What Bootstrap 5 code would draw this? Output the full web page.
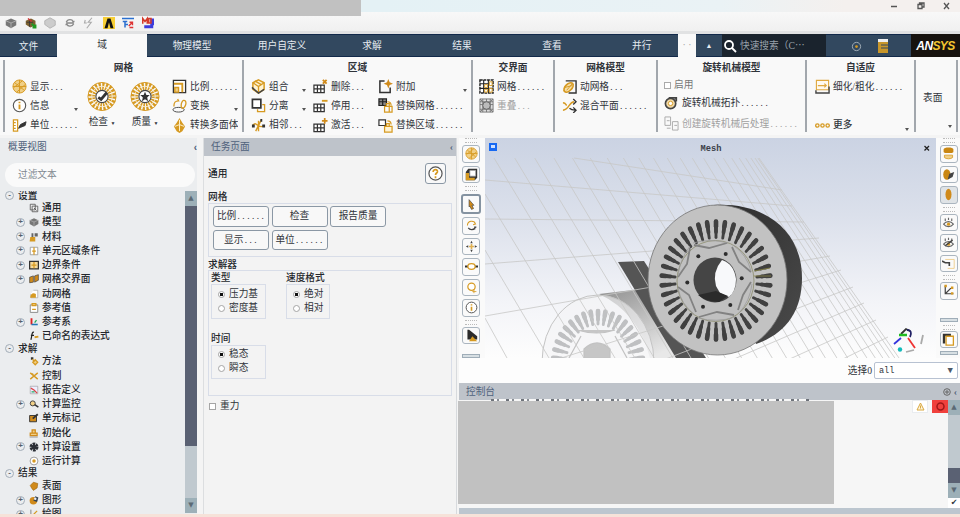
<!DOCTYPE html>
<html lang="zh-CN">
<head>
<meta charset="utf-8">
<title>Mesh</title>
<link href="https://cdn.jsdelivr.net/npm/bootstrap@5.3.0/dist/css/bootstrap.min.css" rel="stylesheet">
<style>
:root{--gold:#d69a22;--ink:#33373c;--navy:#32485f}
body{width:960px;height:517px;overflow:hidden;font:9.7px/12px "Liberation Serif","Noto Sans CJK SC",sans-serif;color:#30343a;background:#f4f4f4;white-space:nowrap}
svg{display:block;flex:none;overflow:hidden}
svg.ic{width:15px;height:15px}
.dt{font:8px/10px "Liberation Mono",monospace}
.titlebar{height:12px;background:linear-gradient(90deg,#e4f1f5 40%,#eaf2f5 75%,#f4f0ee 88%);padding-right:6px}
.redact-top{left:0;top:0;width:361px;height:16px;background:#c1c1c1;z-index:2}
.quick{height:22px;background:linear-gradient(#f8f8f8,#f0f0f0);border-bottom:3px solid #e1e2e3;padding:4px 0 0 5px;gap:7.5px}
.quick svg{width:12px;height:14px}
.tabs{height:23px;background:var(--navy);border-top:1.5px solid #12294a;border-bottom:1.5px solid #12294a;color:#e6ebf0}
.tabs>div{width:90px;display:flex;align-items:center;justify-content:center;flex:none;height:23px;margin-top:-1.5px;padding-top:2px}
.tabs .lit{background:#f9f9f9;color:#30343a;padding:0}
.tabs .find{width:104px;background:#1a232d;color:#98a1aa;justify-content:flex-start;padding-left:1px;gap:3px}
.tabs .brand{width:49px;background:#17130f;font:italic bold 12px "Liberation Sans",sans-serif;color:#fff;letter-spacing:-.6px}
.ribbon{height:78px;background:#f9f9f9;padding-left:3px}
.grp{border-left:2px solid #a2a7ad;height:72px;margin-top:3px;flex:none;padding-top:2px}
.grp h6{font-size:9.7px;line-height:12px;margin:0 0 3px;text-align:center;font-weight:700}
.it{height:19.3px;display:flex;align-items:center;gap:3px}
.it i{margin-left:auto;border:2px solid transparent;border-top:3px solid #555;margin-top:10px;flex:none;height:0}
.dim{color:#a0a0a0}
.big{text-align:center}
.big svg{width:30px;height:31px;margin:0 auto}
.work{height:379px}
.outline{width:197px;background:#ebedef;overflow:hidden;margin-top:3px}
.outline .hd{height:18px;padding:0 0 0 8px;color:#4c5e79}
.filter{height:24px;width:190px;margin:7px 0 3.5px 5px;border-radius:12px;background:#fafafa;padding-left:13px;color:#808890}
.tree{height:323px;overflow:hidden;color:#23262b;font-weight:500}
.sec{height:10.6px;display:flex;align-items:center;padding-left:5px;gap:4px}
.kid{height:14.25px;display:flex;align-items:center;padding-left:16px;gap:3.5px}
.ex{width:9px;height:9px;border:1px solid #a3adb8;border-radius:50%;font:bold 8px/6.5px "Liberation Sans",sans-serif;text-align:center;flex:none;color:#555f6b}
.no{width:9px;flex:none}
.kid svg{width:10px;height:10px}
.sb{width:12px;background:#c0c9cf;display:flex;flex-direction:column}
.sb b{height:15px;background:#9db0b8;color:#5b6a75;font:7px/15px "DejaVu Sans",sans-serif;text-align:center}
.sb u{background:#5a6173}
.phd{height:18px;background:#bec3ca;color:#50627c;padding:0 3px 0 7px}
.task{width:254px;margin:3px 0 0 6px;background:#f3f3f3;border-right:1px solid #d7dadd;border-left:1px solid #dcdee0}
.box{border:1px solid #d8dde8}
.pb{height:20.5px;width:56px;border:1.5px solid #8b98a5;border-radius:3px;background:#f8f8f8;display:flex;align-items:center;justify-content:center;flex:none}
.lb{font-weight:500;color:#24272c}
.rd{width:7px;height:7px;border:1px solid #a5a5a5;border-radius:50%;background:#fff;flex:none}
.rd.on{background:radial-gradient(#111 42%,#fff 55%)}
.opt{height:14px;display:flex;align-items:center;gap:4px}
.tb{width:24px;background:#fafafa;padding-left:1px}
.tbn{width:18px;height:17.5px;margin:0 auto 3px;border:1.5px solid #aab5bf;border-radius:3px;background:#fafafa;display:flex;align-items:center;justify-content:center;flex:none}
.tbn svg{width:13px;height:13px}
.tbn.sel{width:20px;height:20px;border-color:#8593a1;border-width:2px}
.tbn.gr{background:#dfe3e6}
.grip{height:5px;width:12px;margin:0 auto;border-top:1px dotted #bbb;border-bottom:1px dotted #bbb;flex:none}
.mini{width:18px;height:4px;background:#d7dfe3;border:1px solid #9fadb8;margin:0 auto;flex:none}
.view{width:451px;height:220px}
.redact-log{left:-1px;top:1px;width:376px;height:103px;background:#c1c1c1}
.log{height:108px;background:#f6f6f6}
.log-edge{left:32px;top:-1px;width:318px;height:2px;background:repeating-linear-gradient(90deg,#6d727a 0 3px,#f6f6f6 3px 6px,#8a8f96 6px 8px,#f6f6f6 8px 15px)}
.pale{background:#fcfcfc}
.selrow{height:25px;background:#fdfdfd;padding-right:2px}
.dd{width:84px;height:17px;border:1px solid #b8c2d2;border-radius:2px;padding:0 4px;background:#fff;font-family:"Liberation Mono",monospace;font-size:8.500px}
.foot{height:3px;background:#f6e2d9}
</style>
<script src="https://cdn.jsdelivr.net/npm/bootstrap@5.3.0/dist/js/bootstrap.bundle.min.js"></script>
</head>
<body>
<svg width="0" height="0" class="position-absolute"><defs>
<g id="mesh"><circle cx="8" cy="8" r="7" fill="#f0cf86" stroke="#d69a22"/><path d="M3 4l10 8M2 9l9-7M5 14l9-8M8 1v14M1 8h14" stroke="#d69a22" fill="none"/></g>
<g id="info"><circle cx="8" cy="8" r="6.600" fill="#fff" stroke="#555" stroke-width="1.200"/><path d="M8 7v5M8 4v1.600" stroke="#d69a22" stroke-width="2"/></g>
<g id="unit"><path d="M1.500 2h4.500v12h-4.500zM2 5h2M2 8h2M2 11h2" fill="#fff" stroke="#d69a22" stroke-width="1.300"/><path d="M7 11l2-4 6-3-1 4-5 2z" fill="#333" stroke="#333"/></g>
<g id="wheel"><circle cx="16" cy="16" r="11" fill="none" stroke="#d69a22" stroke-width="8" stroke-dasharray="2.100 1.350"/><circle cx="16" cy="16" r="15" fill="none" stroke="#d69a22"/><circle cx="16" cy="16" r="11" fill="none" stroke="#f8ecd2"/><circle cx="16" cy="16" r="6.500" fill="#fff" stroke="#444" stroke-width="1.200"/></g>
<g id="scale"><path d="M1.500 1.500h13v13h-13z" fill="#fff" stroke="#333" stroke-width="1.400"/><path d="M2 5h9v9" fill="none" stroke="#d69a22" stroke-width="2"/><path d="M3 9h4v5H3z" fill="#f0cf86" stroke="#d69a22" stroke-width="1.500"/></g>
<g id="trans"><ellipse cx="7" cy="12.500" rx="6" ry="2.500" fill="none" stroke="#444"/><path d="M2 9c0-5 2-6 5-6l-1-2M10 10c-1-5 2-9 4-7s0 8-3 8z" fill="none" stroke="#d69a22" stroke-width="1.400"/></g>
<g id="poly"><path d="M8 0l3 5 3 4-3 5-3 2-3-2-3-5 3-4z" fill="#d69a22"/><path d="M8 2v5l5 2M8 7L3 9M8 7v7" stroke="#fff3d2" fill="none"/></g>
<g id="cube"><path d="M8 1l6 3v7l-6 4-6-4V4z" fill="#fff3d2" stroke="#d69a22" stroke-width="1.600"/><path d="M2 4l6 4 6-4M8 8v7M4 2l7 4" fill="none" stroke="#d69a22" stroke-width="1.400"/><path d="M1 9l7 6 6-4" fill="none" stroke="#444" stroke-width="1.600"/></g>
<g id="split"><path d="M1.500 1.500h9v9h-9z" fill="#fff" stroke="#333" stroke-width="1.800"/><path d="M12 7h2.500v7.500H7V12" fill="none" stroke="#d69a22" stroke-width="1.400"/></g>
<g id="adj"><path d="M2 8c4-6 5 5 12 0M8 3v11M5 14l6-12" fill="none" stroke="#d69a22" stroke-width="1.500"/><path d="M1 7h3v3H1zM12 7h3v3h-3zM10 1h2v3h-2z" fill="#333"/></g>
<g id="grd"><path d="M1 6.500h11v8H1zM1 10.500h11M4.700 6.500v8M8.300 6.500v8" fill="#fff" stroke="#333" stroke-width="1.300"/></g>
<g id="gx"><use href="#grd"/><path d="M10.500 1l4 4m0-4l-4 4" stroke="#d08a1a" stroke-width="2"/></g>
<g id="gm"><use href="#grd"/><path d="M9.500 3h6" stroke="#d69a22" stroke-width="2"/></g>
<g id="gp"><use href="#grd"/><path d="M9.500 3h6M12.500 0v6" stroke="#d08a1a" stroke-width="1.800"/></g>
<g id="app"><path d="M7 2H2v12.500h11V9" fill="none" stroke="#333" stroke-width="1.600"/><path d="M11 0l1.400 3.500L16 5l-3.600 1.500L11 10 9.600 6.500 6 5l3.600-1.500z" fill="#d08a1a"/></g>
<g id="rep"><path d="M1 1h8v7H1zM1 4h8M5 1v7" fill="#888" stroke="#222" stroke-width="1.300"/><path d="M10 4c3 0 4 2 4 4M7 9h8v6H7zM9 9V6h3v9" fill="none" stroke="#d69a22" stroke-width="1.300"/></g>
<g id="rep2"><path d="M1 2h7v6H1z" fill="#fff" stroke="#333" stroke-width="1.300"/><path d="M10 3c3 0 4 2 4 4M7 9h8v6H7zM9 9V6h3v3" fill="#fff3d2" stroke="#d69a22" stroke-width="1.300"/></g>
<g id="net"><path d="M1 1h14v14H1z" fill="#fff" stroke="#222" stroke-width="1.500" stroke-dasharray="3 .8"/><path d="M5 1v14M10 1v14M1 5h14M1 10h14" stroke="#222" stroke-width="1.200"/><path d="M6 6h3v3H6zM11 3h3v4h-3zM6 11h3v3H6zM11 10h3v4h-3z" fill="#fff" stroke="#d69a22"/></g>
<g id="over"><path d="M1 1h14v14H1z" fill="#ddd" stroke="#777"/><path d="M1 4h14M1 7h14M1 12h14M4 1v14M8 1v14M12 1v14M1 1l14 14M15 1L1 15" stroke="#777"/><circle cx="8" cy="8" r="4" fill="#bbb" stroke="#666"/></g>
<g id="dyn"><path d="M4 2h11v13H7" fill="none" stroke="#333" stroke-width="1.500"/><ellipse cx="7" cy="9" rx="6" ry="3.500" transform="rotate(-45 7 9)" fill="#f7dfa8" stroke="#d69a22" stroke-width="1.800"/><path d="M3 9l8-2M5 12l6-7" stroke="#d69a22"/></g>
<g id="mix"><path d="M1 13c7 0 6-9 12-9M1 5c3 0 3 2 4 3" fill="none" stroke="#d69a22" stroke-width="1.500"/><path d="M8 11c2 2 3 2 6 2M12 1l3 3-3 3M12 10l3 3-3 3" fill="none" stroke="#333" stroke-width="1.400"/></g>
<g id="turbo"><circle cx="7" cy="9" r="5.500" fill="#f0d9a8" stroke="#444" stroke-width="1.800"/><circle cx="7" cy="9" r="2.300" fill="#fff" stroke="#d69a22"/><path d="M5 3h8v4" fill="none" stroke="#444" stroke-width="2"/></g>
<g id="post"><path d="M1 1h6v9H1zM9 6h6v9H9zM3 5h3M11 10h3M7 13h-4" fill="none" stroke="#aaa"/></g>
<g id="adapt"><path d="M1.500 1.500h13v10h-13zM3 7h9M10 5l2 2-2 2" fill="#fffaf0" stroke="#e0a940" stroke-width="1.200"/><path d="M1 12v3h14V8" fill="none" stroke="#444" stroke-width="1.500"/></g>
<g id="box3"><path d="M8 2l7 3v6l-7 4-7-4V5z" fill="#777"/><path d="M1 5l7 3 7-3M8 8v7" fill="none" stroke="#bbb"/></g>
<g id="pgs"><path d="M2 2h8v9H2zM5 5h9v9H5z" fill="#eee" stroke="#555" stroke-width="1.300"/><path d="M8 8l4 4" stroke="#555" stroke-width="1.500"/></g>
<g id="mat"><path d="M2 8h8v7H1z" fill="#d69a22"/><path d="M4 2h3v6H4zM9 2h5v5H9z" fill="#666"/></g>
<g id="cz"><path d="M2 2h12v12H2z" fill="#fff" stroke="#999" stroke-width="1.400"/><path d="M8 2v12M5 8h6" stroke="#d69a22" stroke-width="2"/></g>
<g id="bc"><path d="M1 2h14v12H1z" fill="#f6d99a" stroke="#333" stroke-width="2"/><path d="M8 3v10M4 8h8" stroke="#d69a22" stroke-width="2"/></g>
<g id="mi"><path d="M1 5l6-2v10l-6 1zM9 3l6-2v9l-6 3z" fill="#d08a1a" stroke="#333"/></g>
<g id="dm"><path d="M7 2h7v12H3V8" fill="#fff" stroke="#999"/><path d="M2 14c0-7 5-9 9-6v6z" fill="#d69a22"/></g>
<g id="clip"><path d="M2 3h12v12H2z" fill="#fff" stroke="#888" stroke-width="1.500"/><path d="M5 1h6v3H5zM5 10h6" stroke="#d69a22" stroke-width="2" fill="#f0cf86"/></g>
<g id="axes"><path d="M4 2v10" stroke="#d22" stroke-width="3"/><path d="M4 12h10" stroke="#27b" stroke-width="2.500"/><path d="M9 9l3-4" stroke="#2a5" stroke-width="2"/></g>
<g id="fx"><path d="M8 2c-4-1-3 6-5 12M3 7h5" fill="none" stroke="#222" stroke-width="2"/><path d="M9 10l6-1" stroke="#d69a22" stroke-width="3"/></g>
<g id="meth"><path d="M3 2h4v4H3z" fill="#333"/><path d="M10 6l4 4-4 4-4-4zM5 5l4 4" stroke="#d69a22" stroke-width="2" fill="#f0cf86"/></g>
<g id="ctrl"><path d="M2 3l12 10M14 3L2 13M5 4l2 2" stroke="#d69a22" stroke-width="2.200"/></g>
<g id="chart"><path d="M2 2h12v12H2z" fill="#eef" stroke="#999"/><path d="M3 5l5 3 5 5" stroke="#d44" stroke-width="2" fill="none"/><path d="M4 11h5" stroke="#2a6" stroke-width="2"/></g>
<g id="mon"><circle cx="6" cy="7" r="4" fill="#f0cf86" stroke="#444" stroke-width="1.600"/><path d="M9 9l6 4" stroke="#333" stroke-width="2.500"/></g>
<g id="reg"><path d="M1 4h11v10H1z" fill="#d08a1a" stroke="#333" stroke-width="1.500"/><path d="M6 9l8-7" stroke="#333" stroke-width="3"/></g>
<g id="init"><path d="M5 8V3h5v5M2 8h11v4H2z" fill="#f0cf86" stroke="#d08a1a" stroke-width="2"/><path d="M1 14.500h13" stroke="#777"/></g>
<g id="gear"><circle cx="8" cy="8" r="5" fill="none" stroke="#2b2f36" stroke-width="4.500" stroke-dasharray="4 1.200"/><circle cx="8" cy="8" r="4" fill="#2b2f36"/></g>
<g id="run"><circle cx="8" cy="8" r="6.300" fill="#fff" stroke="#999" stroke-width="1.500"/><circle cx="8" cy="8" r="2.800" fill="#d69a22"/></g>
<g id="surf"><path d="M2 7l5-5 7 2-1 7-6 4-3-4z" fill="#d08a1a" stroke="#9b6612"/></g>
<g id="pie"><circle cx="7" cy="9" r="6" fill="#d08a1a"/><path d="M7 9l3-7 5 2-2 7z" fill="#345"/><circle cx="10" cy="6" r="2" fill="#eee"/></g>
<g id="plot"><path d="M3 1v13h12" fill="none" stroke="#777" stroke-width="1.400"/><path d="M4 12l9-9" stroke="#d69a22" stroke-width="2"/></g>
<g id="vcube"><path d="M4 1h11v11l-3 3H1V5z" fill="#333"/><path d="M6 3h7v7H6z" fill="#fff" stroke="#aaa"/><path d="M1 6h4v6h7v3H1z" fill="#d69a22"/></g>
<g id="arrow"><path d="M5 2l6 7H8.500l2 4-2.500 1-2-4-1 1z" fill="#d08a1a" stroke="#444" stroke-width=".8"/></g>
<g id="rot"><path d="M3 8c0-6 8-7 10-2M11 3l2 3-3 1" fill="none" stroke="#d69a22" stroke-width="1.300"/><path d="M4 11c2 3 7 3 9-1M12 13v-3h2" fill="none" stroke="#444" stroke-width="1.400"/></g>
<g id="pan"><path d="M8 5v6M5 8h6" stroke="#e0b050" stroke-width="2"/><path d="M8 1l1.500 3h-3zM8 15l1.500-3h-3zM1 8l3-1.500v3zM15 8l-3-1.500v3z" fill="#444"/></g>
<g id="zm"><path d="M0 8h4M12 8h4" stroke="#333" stroke-width="2.500"/><ellipse cx="8" cy="8" rx="4.500" ry="3.500" fill="#fff" stroke="#d69a22" stroke-width="1.600"/></g>
<g id="zb"><circle cx="8" cy="7" r="4.500" fill="#fff" stroke="#d69a22" stroke-width="1.500"/><path d="M11 10v5M9 13h5" stroke="#d69a22"/></g>
<g id="play"><path d="M3 1h2l10 8v4H3z" fill="#2b2b2b"/><path d="M9 9l6 6H5z" fill="#d69a22"/></g>
<g id="cyl"><path d="M2 3c0-3 12-3 12 0v3c0 2-12 2-12 0z" fill="#c98712"/><path d="M3 10h10v3c-2 2-8 2-10 0z" fill="#f0cf86" stroke="#d69a22"/></g>
<g id="half"><ellipse cx="6" cy="8" rx="4.500" ry="6.500" fill="#c98712"/><path d="M9 7l6-2-2 6-6 3z" fill="#444"/></g>
<g id="disc"><ellipse cx="8" cy="8" rx="3.700" ry="7" fill="#d08a1a"/></g>
<g id="eye"><path d="M2 10c3-4 9-4 12 0-3 4-9 4-12 0zM4 3v3M8 2v3M12 3v3" fill="none" stroke="#666" stroke-width="1.400"/><circle cx="8" cy="10" r="2" fill="#d69a22"/></g>
<g id="ruler"><path d="M4 3h11v11H7" fill="none" stroke="#ecc87f"/><path d="M0 5l4 2 5 0v4" fill="none" stroke="#444" stroke-width="2"/></g>
<g id="ax"><path d="M4 2v10h10M4 12l7-7" fill="none" stroke="#444" stroke-width="1.500"/><path d="M3 1h3v3H3zM11 3h3v3h-3zM11 10h3v3h-3z" fill="#d69a22"/></g>
<g id="lay"><path d="M1 1h10v3H4v9H1z" fill="#333"/><path d="M5 4h9v11H5z" fill="#fff" stroke="#d69a22" stroke-width="1.600"/></g>
</defs></svg>

<header class="position-relative">
  <div class="redact-top position-absolute"></div>
  <div class="titlebar d-flex justify-content-end"><svg width="68" height="12" viewBox="0 0 68 12" fill="none" stroke="#555"><path d="M5 6.500h6M32 4.500h4v4h-4zM33.500 4V3H38v4h-1.500M58 3l5 6M63 3l-5 6" stroke-width="1.300"/></svg></div>
  <div class="quick d-flex">
    <svg viewBox="0 0 16 16"><use href="#box3"/></svg>
    <svg viewBox="0 0 16 16"><path d="M1 5l7-3 6 3v6l-7 3-6-4z" fill="#7c6130"/><path d="M2 7h9M6 3v10" stroke="#333"/><path d="M4 2l5 4" stroke="#c33" stroke-width="2"/><path d="M9 9l5 5m0-4v4h-4" stroke="#292" stroke-width="2.500" fill="none"/></svg>
    <svg viewBox="0 0 16 16"><path d="M8 1l7 4v6l-7 4-7-5V5z" fill="#ccc" stroke="#aaa"/></svg>
    <svg viewBox="0 0 16 16"><path d="M3 7c2-5 8-4 9-1h2M13 9c-2 4-8 4-9 1H2M3 8h10" fill="none" stroke="#888" stroke-width="1.800"/></svg>
    <svg viewBox="0 0 16 16"><path d="M12 1L7 7h4l-6 8M3 4l-1 4h3" fill="none" stroke="#aaa" stroke-width="1.500"/></svg>
    <svg viewBox="0 0 16 16"><path d="M0 0h16v16H0z" fill="#f7cf36"/><path d="M2 15L6 2h4l4 13h-4L8 7l-2 8z" fill="#111"/></svg>
    <svg viewBox="0 0 16 16"><path d="M0 2h16M1 6h6M4 5v9M4 10h4" stroke="#2a6fd0" stroke-width="2" fill="none"/><path d="M9 12l5-5M10 7h4v4M10 14h5" stroke="#d33" stroke-width="1.800" fill="none"/></svg>
    <svg viewBox="0 0 16 16"><path d="M11 2h5v9h-5zM3 11h12v4H3z" fill="#3c3cdc"/><path d="M1 9V2l3 4 3-4v7M9 2h3v6H9z" stroke="#d43a2a" stroke-width="2" fill="none"/></svg>
  </div>
</header>

<nav class="tabs d-flex">
  <div style="width:57px;padding-top:4px">文件</div><div class="lit">域</div><div>物理模型</div><div>用户自定义</div><div>求解</div><div>结果</div><div>查看</div>
  <div class="justify-content-start ps-0" style="width:81px"><span style="margin-left:35px">并行</span></div>
  <div class="lit" style="width:18px"><span class="dim">· ·</span></div>
  <div style="width:26px;font-size:7px">▲</div>
  <div class="find"><svg width="14" height="14" viewBox="0 0 14 14" fill="none" stroke="#fff" stroke-width="1.800"><circle cx="6" cy="6" r="4"/><path d="M9 9l4 4"/></svg>快速搜索（C⋯</div>
  <div style="width:85px;gap:16px;padding-left:2px"><svg width="11" height="11" viewBox="0 0 16 16"><circle cx="8" cy="8" r="6" fill="none" stroke="#a9b5bf" stroke-width="1.300"/><circle cx="8" cy="8" r="2" fill="#d69a22"/></svg><svg width="10" height="14" viewBox="0 0 10 14"><path d="M0 0h10v3H0z" fill="#eee"/><path d="M0 3h10v11H0z" fill="#c8962a"/><path d="M3 6h7M3 9h7" stroke="#32485f"/></svg></div>
  <div class="brand">AN<span style="color:#f2c530">SYS</span></div>
</nav>

<section class="ribbon d-flex">
  <div class="grp" style="width:239px"><h6>网格</h6>
    <div class="d-flex">
      <div style="width:73px;padding-left:7px"><div class="it"><svg class="ic" viewBox="0 0 16 16"><use href="#mesh"/></svg><span>显示<span class="dt">...</span></span></div><div class="it"><svg class="ic" viewBox="0 0 16 16"><use href="#info"/></svg>信息<i></i></div><div class="it"><svg class="ic" viewBox="0 0 16 16"><use href="#unit"/></svg><span>单位<span class="dt">......</span></span></div></div>
      <div class="big d-flex" style="width:94px;padding:4px 0 0 9px;gap:13px"><div><svg viewBox="0 0 32 32"><use href="#wheel"/><path d="M12 17l3 2 6-7" fill="none" stroke="#333" stroke-width="3"/></svg><div class="pt-1">检查 <span style="font-size:5px">▼</span></div></div><div><svg viewBox="0 0 32 32"><use href="#wheel"/><path d="M16 11l1.500 3.500H21L18.300 17l1 4-3.300-2-3.300 2 1-4L11 14.500h3.500z" fill="#333"/></svg><div class="pt-1">质量 <span style="font-size:5px">▼</span></div></div></div>
      <div style="width:66px;overflow:hidden"><div class="it"><svg class="ic" viewBox="0 0 16 16"><use href="#scale"/></svg><span>比例<span class="dt">......</span></span></div><div class="it"><svg class="ic" viewBox="0 0 16 16"><use href="#trans"/></svg>变换<i></i></div><div class="it"><svg class="ic" viewBox="0 0 16 16"><use href="#poly"/></svg>转换多面体</div></div>
    </div></div>
  <div class="grp" style="width:229px"><h6>区域</h6>
    <div class="d-flex" style="padding-left:7px">
      <div style="width:55px"><div class="it"><svg class="ic" viewBox="0 0 16 16"><use href="#cube"/></svg>组合<i></i></div><div class="it"><svg class="ic" viewBox="0 0 16 16"><use href="#split"/></svg>分离<i></i></div><div class="it"><svg class="ic" viewBox="0 0 16 16"><use href="#adj"/></svg><span>相邻<span class="dt">...</span></span></div></div>
      <div style="width:57px;margin-left:7px"><div class="it"><svg class="ic" viewBox="0 0 16 16"><use href="#gx"/></svg><span>删除<span class="dt">...</span></span></div><div class="it"><svg class="ic" viewBox="0 0 16 16"><use href="#gm"/></svg><span>停用<span class="dt">...</span></span></div><div class="it"><svg class="ic" viewBox="0 0 16 16"><use href="#gp"/></svg><span>激活<span class="dt">...</span></span></div></div>
      <div style="width:89px;margin-left:8px"><div class="it"><svg class="ic" viewBox="0 0 16 16"><use href="#app"/></svg>附加<i></i></div><div class="it"><svg class="ic" viewBox="0 0 16 16"><use href="#rep"/></svg><span>替换网格<span class="dt">......</span></span></div><div class="it"><svg class="ic" viewBox="0 0 16 16"><use href="#rep2"/></svg><span>替换区域<span class="dt">......</span></span></div></div>
    </div></div>
  <div class="grp" style="width:82px"><h6>交界面</h6><div style="padding-left:6px"><div class="it"><svg class="ic" viewBox="0 0 16 16"><use href="#net"/></svg><span>网格<span class="dt">......</span></span></div><div class="it dim"><svg class="ic" viewBox="0 0 16 16"><use href="#over"/></svg><span>重叠<span class="dt">...</span></span></div></div></div>
  <div class="grp" style="width:103px"><h6>网格模型</h6><div style="padding-left:7px"><div class="it"><svg class="ic" viewBox="0 0 16 16"><use href="#dyn"/></svg><span>动网格<span class="dt">...</span></span></div><div class="it"><svg class="ic" viewBox="0 0 16 16"><use href="#mix"/></svg><span>混合平面<span class="dt">......</span></span></div></div></div>
  <div class="grp" style="width:149px"><h6>旋转机械模型</h6><div style="padding-left:6px"><div class="it" style="height:16px;color:#777"><span class="border bg-white" style="width:7px;height:7px;border-color:#aaa!important"></span>启用</div><div class="it"><svg class="ic" viewBox="0 0 16 16"><use href="#turbo"/></svg><span>旋转机械拓扑<span class="dt">......</span></span></div><div class="it dim" style="height:23px"><svg class="ic" viewBox="0 0 16 16"><use href="#post"/></svg><span>创建旋转机械后处理<span class="dt">......</span></span></div></div></div>
  <div class="grp" style="width:109px"><h6>自适应</h6><div style="padding:0 5px 0 8px"><div class="it"><svg class="ic" viewBox="0 0 16 16"><use href="#adapt"/></svg><span>细化/粗化<span class="dt">......</span></span></div><div class="it"></div><div class="it"><svg class="ic" viewBox="0 0 16 16" fill="none" stroke="#d69a22" stroke-width="1.400"><circle cx="2.500" cy="8" r="1.800"/><circle cx="8" cy="8" r="1.800"/><circle cx="13.500" cy="8" r="1.800"/></svg><b class="fw-medium">更多</b><i></i></div></div></div>
  <div class="grp" style="width:42px"><div style="padding:30px 4px 0 7px">表面<div class="it" style="height:36px"><i></i></div></div></div>
  <div class="grp" style="width:3px"></div>
</section>

<main class="work d-flex">
  <aside class="outline">
    <div class="hd d-flex align-items-center">概要视图<span class="ms-auto" style="font:bold 10px 'Liberation Sans'">‹</span></div>
    <div class="filter d-flex align-items-center">过滤文本</div>
    <div class="d-flex">
      <div class="tree" style="width:185px" id="tree"></div>
      <div class="sb" style="height:322px"><b>▲</b><u style="height:240px"></u><b class="mt-auto">▼</b></div>
    </div>
  </aside>
  <section class="task">
    <div class="phd d-flex align-items-center justify-content-between"><span>任务页面</span><b>‹</b></div>
    <div style="padding:7px 4px 0 4px">
      <div class="d-flex align-items-center justify-content-between" style="height:21px;padding-right:6px"><span class="lb">通用</span><span class="pb" style="width:21px"><svg width="15" height="15" viewBox="0 0 16 16"><circle cx="8" cy="8" r="7" fill="#fff" stroke="#555" stroke-width="1.300"/><path d="M5.500 6.500c0-4 5.500-3 4.500 0-.4 1-2 1.300-2 3M8 11v2" fill="none" stroke="#d69a22" stroke-width="1.800"/></svg></span></div>
      <div class="lb" style="padding-top:7px;height:19px">网格</div>
      <div class="box" style="height:54px;padding:2px 4px"><div class="d-flex" style="gap:2.500px"><span class="pb"><span>比例<span class="dt">......</span></span></span><span class="pb">检查</span><span class="pb">报告质量</span></div><div class="d-flex" style="gap:2.500px;margin-top:3px"><span class="pb"><span>显示<span class="dt">...</span></span></span><span class="pb"><span>单位<span class="dt">......</span></span></span></div></div>
      <div class="lb" style="height:13px;padding-top:2px">求解器</div>
      <div class="box" style="height:126px;padding:1px 2px">
        <div class="d-flex" style="gap:20px"><div style="width:55px"><div class="lb">类型</div><div class="box" style="height:35px;padding:2px 6px"><div class="opt"><span class="rd on"></span>压力基</div><div class="opt"><span class="rd"></span>密度基</div></div></div><div style="width:44px"><div class="lb">速度格式</div><div class="box" style="height:35px;padding:2px 6px"><div class="opt"><span class="rd on"></span>绝对</div><div class="opt"><span class="rd"></span>相对</div></div></div></div>
        <div style="width:55px;margin-top:14px"><div class="lb">时间</div><div class="box" style="height:34px;padding:1px 6px"><div class="opt"><span class="rd on"></span>稳态</div><div class="opt"><span class="rd"></span>瞬态</div></div></div>
      </div>
      <div class="opt" style="margin-top:3px;padding-left:1px"><span class="rd rounded-0"></span>重力</div>
    </div>
  </section>
  <section class="flex-fill d-flex flex-column" style="margin:3px 0 0 2px;width:501px">
    <div class="d-flex pale" style="height:220px">
      <div class="tb d-flex flex-column overflow-hidden" style="width:27px;padding:0 2px 0 0">
        <span class="grip"></span><div style="height:2px"></div>
        <span class="tbn"><svg viewBox="0 0 16 16"><use href="#mesh"/></svg></span><span class="tbn"><svg viewBox="0 0 16 16"><use href="#vcube"/></svg></span>
        <span class="grip"></span><div style="height:3px"></div>
        <span class="tbn sel"><svg viewBox="0 0 16 16"><use href="#arrow"/></svg></span>
        <span class="tbn"><svg viewBox="0 0 16 16"><use href="#rot"/></svg></span><span class="tbn"><svg viewBox="0 0 16 16"><use href="#pan"/></svg></span><span class="tbn"><svg viewBox="0 0 16 16"><use href="#zm"/></svg></span><span class="tbn"><svg viewBox="0 0 16 16"><use href="#zb"/></svg></span><span class="tbn"><svg viewBox="0 0 16 16"><use href="#info"/></svg></span>
        <span class="grip"></span><div style="height:2px"></div>
        <span class="tbn"><svg viewBox="0 0 16 16"><use href="#play"/></svg></span><div style="height:7px"></div><span class="mini"></span>
      </div>
      <svg class="view" viewBox="486 138 451 220">
        <defs><linearGradient id="sky" x2="0" y2="1"><stop offset="0" stop-color="#cbd3e3"/><stop offset=".35" stop-color="#dbe0eb"/><stop offset=".75" stop-color="#f3f4f8"/><stop offset="1" stop-color="#fdfdfd"/></linearGradient>
        <linearGradient id="side" x2="1" y2="1"><stop offset="0" stop-color="#2c2c2c"/><stop offset="1" stop-color="#4b4b4b"/></linearGradient>
        <linearGradient id="shade" x2=".6" y2="1"><stop offset="0" stop-color="#8e8e8e"/><stop offset="1" stop-color="#e8e8e8"/></linearGradient></defs>
        <path d="M486 138h451v220H486z" fill="url(#sky)"/>
        <path d="M600 294l50-6 36 70h-35q-12-46-51-64z" fill="url(#shade)"/>
        <ellipse cx="599" cy="362" rx="56" ry="67" fill="#f4f4f5" fill-opacity=".6" stroke="#c4c4c4"/>
        <g id="ghost" stroke="#bfc0c2" stroke-linecap="round"></g>
        <path d="M585 358v-9q13-12 26 0v9zM578 330q20 6 38 0M570 358l12-22M628 358l-12-22" fill="#c6c6c6" stroke="#c2c2c2" stroke-width="1.200"/>
        <path d="M619 262l26-1 62 97h-30z" fill="#555"/>
        <g id="floor" stroke="#c8c8c6" stroke-width=".8" fill="none"></g>
        <path d="M715 205C765 202 803 230 803 278C803 312 786 334 757 344z" fill="url(#side)"/>
        <ellipse cx="718.500" cy="280" rx="69.500" ry="75" fill="#c2c2c2" stroke="#747474" stroke-width=".8"/>
        <g id="slots" stroke="#404040" stroke-linecap="round"></g>
        <ellipse cx="716.500" cy="281" rx="38.500" ry="40.500" fill="#c0c0c0" stroke="#8c8b6c" stroke-width=".8"/>
        <path d="M695 245l15 3 18-5M733 247l7 15 12 10M752 282l-8 13-5 15M735 315l-17-3-18 5M697 312l-7-17-11-8M679 277l9-13 3-16" fill="none" stroke="#828282" stroke-width="1.800"/>
        <path d="M694 243q17-5 35 0M734 245q14 10 18 26M753 284q-2 17-13 29M736 317q-18 6-37 1M695 314q-13-10-16-26M679 276q2-17 12-30" fill="none" stroke="#9a9a9a" stroke-width=".8"/>
        <g fill="#2d2d2d"><circle cx="699.300" cy="256.300" r="2"/><circle cx="726.700" cy="254" r="2"/><circle cx="742.700" cy="278.300" r="2"/><circle cx="731.300" cy="305" r="2"/><circle cx="704" cy="306.700" r="2"/><circle cx="688.300" cy="282.500" r="2"/></g>
        <ellipse cx="716" cy="280" rx="21.500" ry="22.500" fill="#454545"/>
        <path d="M723 260q-10 12-6 26l4 7 9 4q7-6 7-18-2-15-14-19z" fill="#f8f9fb"/><path d="M699 295l18-4 12 5-9 6q-13 0-21-7z" fill="#2b2b2b"/>
        <path d="M755 271l16-3M755 276l17 0" stroke="#8a8746" stroke-width=".8"/>
        <path d="M490 143h8v8h-8z" fill="#1769f2"/><path d="M492 145h4v3h-4z" fill="#cfe0ff"/>
        <text x="712" y="151" text-anchor="middle" font-family="Liberation Mono,monospace" font-size="8.700" font-weight="700" fill="#3a3f48">Mesh</text>
        <path d="M925.500 146l4.500 4.500m0-4.500l-4.500 4.500" stroke="#222" stroke-width="1.300"/>
        <g fill="none" stroke-width="1.800"><path d="M902 334l5-5 4 2" stroke="#333"/><path d="M908 330c4 0 5 3 3 7" stroke="#226"/><path d="M900 335h8" stroke="#2b2" stroke-width="2.500"/><path d="M895 344l7-6" stroke="#33d"/><path d="M909 338l7 10" stroke="#e33"/><path d="M907 352l8-2M922 344l2-9" stroke="#aaa"/></g><circle cx="901" cy="349.500" r="2.200" fill="#1bb"/>
      </svg>
      <div class="tb d-flex flex-column overflow-hidden">
        <span class="grip"></span><div style="height:2px"></div>
        <span class="tbn"><svg viewBox="0 0 16 16"><use href="#cyl"/></svg></span><span class="tbn"><svg viewBox="0 0 16 16"><use href="#half"/></svg></span><span class="tbn gr"><svg viewBox="0 0 16 16"><use href="#disc"/></svg></span>
        <span class="grip"></span><div style="height:2px"></div>
        <span class="tbn"><svg viewBox="0 0 16 16"><use href="#eye"/></svg></span><span class="tbn"><svg viewBox="0 0 16 16"><use href="#eye"/><path d="M4 12L13 5" stroke="#444" stroke-width="1.800"/></svg></span><span class="tbn"><svg viewBox="0 0 16 16"><use href="#ruler"/></svg></span>
        <span class="grip"></span><div style="height:2px"></div>
        <span class="tbn"><svg viewBox="0 0 16 16"><use href="#ax"/></svg></span>
        <div style="height:15px"></div><span class="mini"></span><div style="height:3px"></div><span class="grip"></span><div style="height:1px"></div>
        <span class="tbn"><svg viewBox="0 0 16 16"><use href="#lay"/></svg></span><span class="mini"></span>
      </div>
    </div>
    <div class="selrow d-flex align-items-center justify-content-end" style="gap:2px"><span>选择0</span><span class="dd d-flex align-items-center justify-content-between">all<span style="font-size:9px;color:#4c5a68">▼</span></span></div>
    <div class="phd d-flex align-items-center justify-content-between" style="height:17px"><span>控制台</span><span><svg class="d-inline-block" width="8" height="8" viewBox="0 0 8 8" fill="none" stroke="#666"><circle cx="4" cy="4" r="3.300"/><path d="M3 3h2v2H3z"/></svg> <b>‹</b></span></div>
    <div class="log d-flex position-relative justify-content-end">
      <div class="log-edge position-absolute"></div>
      <div class="redact-log position-absolute"></div>
      <span class="border border-secondary-subtle bg-white d-flex align-items-center justify-content-center" style="width:16px;height:13px;margin-right:4px"><svg width="9" height="9" viewBox="0 0 9 9"><path d="M4.500 1L8 8H1zM4.500 3.500v3" fill="#fff5dc" stroke="#d9a840"/></svg></span>
      <span class="d-flex align-items-center justify-content-center" style="width:16px;height:13px;background:#f0403c"><svg width="9" height="9" viewBox="0 0 9 9"><circle cx="4.500" cy="4.500" r="3.500" fill="none" stroke="#a01818" stroke-width="1.500"/></svg></span>
      <div class="sb" style="height:108px"><b>▲</b><div style="height:53px"></div><u style="height:15px"></u><b>▼</b><span class="bg-white text-center" style="font:8px/10px 'DejaVu Sans'">✔</span></div>
    </div>
    <div style="height:6px;background:#bcc6cf"></div>
  </section>
</main>
<div class="foot position-relative"></div>
<script>
// Outline tree rows: section rows are strings, child rows are [icon, label, expandable].
const rows=['-设置',['pgs','通用'],['box3','模型',1],['mat','材料',1],['cz','单元区域条件',1],['bc','边界条件',1],['mi','网格交界面',1],['dm','动网格'],['clip','参考值'],['axes','参考系',1],['fx','已命名的表达式'],
'-求解',['meth','方法'],['ctrl','控制'],['chart','报告定义'],['mon','计算监控',1],['reg','单元标记'],['init','初始化'],['gear','计算设置',1],['run','运行计算'],
'-结果',['surf','表面'],['pie','图形',1],['plot','绘图',1]];
document.getElementById('tree').innerHTML=rows.map(r=>typeof r==='string'
 ?`<div class="sec"><span class="ex">-</span>${r.slice(1)}</div>`
 :`<div class="kid"><span class="${r[2]?'ex':'no'}">${r[2]?'+':''}</span><svg viewBox="0 0 16 16"><use href="#${r[0]}"/></svg>${r[1]}</div>`).join('');
// Radial stator slots, tapered toward the bore.
function slots(cx,cy,rx,ry,ix,iy,n){let s='';for(let k=0;k<n;k++){const a=(k+.5)*2*Math.PI/n,c=Math.cos(a),d=Math.sin(a);
 for(const [f,w] of [[0,2.9],[.35,3.8],[.7,4.6]])s+=`<path d="M${cx+c*(ix+(rx-ix)*f)} ${cy+d*(iy+(ry-iy)*f)}L${cx+c*rx} ${cy+d*ry}" stroke-width="${w}"/>`}return s}
document.getElementById('slots').innerHTML=slots(717,280.5,54.5,59,41,43,38);
document.getElementById('ghost').innerHTML=slots(599,362,45,51,32,38,38);
// Perspective floor grid.
let g='M486 318L508 358M486 250L550 358M486 194L585 358';
for(let k=0;k<=22;k++){const u=1-Math.pow(1-k/22,1.75);g+=`M${495+265*u} 158L${616+284*(.75*u+.25*k/22)} 358`}
[[575,158,783,190],[486,180,793,206],[486,219,805,222],[486,264,820,238],[486,316,831,256],[486,382,842,270],[560,400,854,287],[640,400,865,303],[700,400,877,320],[760,400,889,337]].forEach(l=>g+=`M${l[0]} ${l[1]}L${l[2]} ${l[3]}`);
document.getElementById('floor').innerHTML=`<path d="${g}"/>`;
</script>
</body>
</html>
